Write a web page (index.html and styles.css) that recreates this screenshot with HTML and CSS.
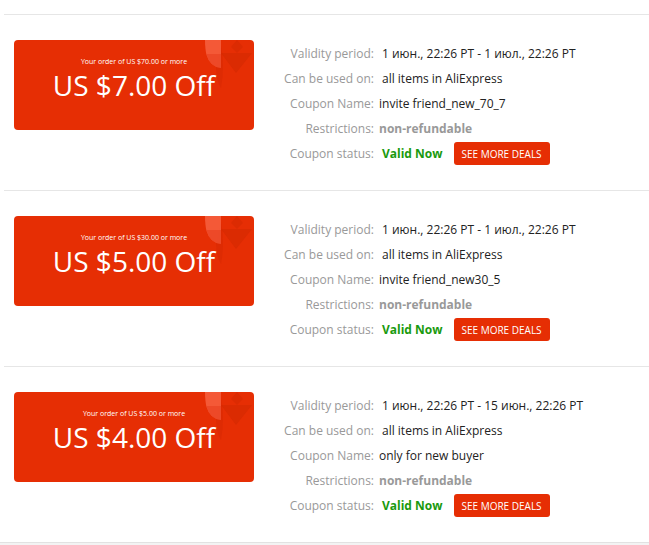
FILE: index.html
```html
<!DOCTYPE html>
<html>
<head>
<meta charset="utf-8">
<link rel="stylesheet" href="styles.css">
</head>
<body>
<div class="list">
  <div class="coupon">
    <div class="card">
      <svg class="deco" width="60" height="90" viewBox="0 0 60 90">
        <path d="M27 6 Q31 26 27 48 Q22 40 22 28 Z" fill="#c92300" opacity="0.25"/>
        <path d="M11 0 H27 V28 Q16 27 12.5 15 Q11 9 11 0 Z" fill="#f76445" opacity="0.8"/>
        <path d="M12.5 14 H27 V28 Q16 27 12.5 14 Z" fill="#e5391a" opacity="0.5"/>
        <path d="M27 13 H58 L42 33 Z" fill="#cf2800" opacity="0.5"/>
        <path d="M43 0 L49 7 L43 13 L37 7 Z" fill="#c82400" opacity="0.35"/>
      </svg>
      <div class="min">Your order of US $70.00 or more</div>
      <div class="amount">US $7.00 Off</div>
    </div>
    <div class="info">
      <div class="row"><span class="label">Validity period:</span><span class="val">1 июн., 22:26 PT - 1 июл., 22:26 PT</span></div>
      <div class="row"><span class="label">Can be used on:</span><span class="val">all items in AliExpress</span></div>
      <div class="row"><span class="label">Coupon Name:</span><span class="val name">invite friend_new_70_7</span></div>
      <div class="row"><span class="label">Restrictions:</span><span class="val muted">non-refundable</span></div>
      <div class="row"><span class="label">Coupon status:</span><span class="val valid">Valid Now</span><a class="btn">SEE MORE DEALS</a></div>
    </div>
  </div>
  <div class="coupon">
    <div class="card">
      <svg class="deco" width="60" height="90" viewBox="0 0 60 90">
        <path d="M27 6 Q31 26 27 48 Q22 40 22 28 Z" fill="#c92300" opacity="0.25"/>
        <path d="M11 0 H27 V28 Q16 27 12.5 15 Q11 9 11 0 Z" fill="#f76445" opacity="0.8"/>
        <path d="M12.5 14 H27 V28 Q16 27 12.5 14 Z" fill="#e5391a" opacity="0.5"/>
        <path d="M27 13 H58 L42 33 Z" fill="#cf2800" opacity="0.5"/>
        <path d="M43 0 L49 7 L43 13 L37 7 Z" fill="#c82400" opacity="0.35"/>
      </svg>
      <div class="min">Your order of US $30.00 or more</div>
      <div class="amount">US $5.00 Off</div>
    </div>
    <div class="info">
      <div class="row"><span class="label">Validity period:</span><span class="val">1 июн., 22:26 PT - 1 июл., 22:26 PT</span></div>
      <div class="row"><span class="label">Can be used on:</span><span class="val">all items in AliExpress</span></div>
      <div class="row"><span class="label">Coupon Name:</span><span class="val name">invite friend_new30_5</span></div>
      <div class="row"><span class="label">Restrictions:</span><span class="val muted">non-refundable</span></div>
      <div class="row"><span class="label">Coupon status:</span><span class="val valid">Valid Now</span><a class="btn">SEE MORE DEALS</a></div>
    </div>
  </div>
  <div class="coupon">
    <div class="card">
      <svg class="deco" width="60" height="90" viewBox="0 0 60 90">
        <path d="M27 6 Q31 26 27 48 Q22 40 22 28 Z" fill="#c92300" opacity="0.25"/>
        <path d="M11 0 H27 V28 Q16 27 12.5 15 Q11 9 11 0 Z" fill="#f76445" opacity="0.8"/>
        <path d="M12.5 14 H27 V28 Q16 27 12.5 14 Z" fill="#e5391a" opacity="0.5"/>
        <path d="M27 13 H58 L42 33 Z" fill="#cf2800" opacity="0.5"/>
        <path d="M43 0 L49 7 L43 13 L37 7 Z" fill="#c82400" opacity="0.35"/>
      </svg>
      <div class="min">Your order of US $5.00 or more</div>
      <div class="amount">US $4.00 Off</div>
    </div>
    <div class="info">
      <div class="row"><span class="label">Validity period:</span><span class="val">1 июн., 22:26 PT - 15 июн., 22:26 PT</span></div>
      <div class="row"><span class="label">Can be used on:</span><span class="val">all items in AliExpress</span></div>
      <div class="row"><span class="label">Coupon Name:</span><span class="val name">only for new buyer</span></div>
      <div class="row"><span class="label">Restrictions:</span><span class="val muted">non-refundable</span></div>
      <div class="row"><span class="label">Coupon status:</span><span class="val valid">Valid Now</span><a class="btn">SEE MORE DEALS</a></div>
    </div>
  </div>
  <div class="end"></div>
</div>
</body>
</html>
```
FILE: styles.css
```css
* { box-sizing: border-box; }
html, body {
  margin: 0;
  padding: 0;
  background: #fff;
  font-family: "Open Sans", "Liberation Sans", sans-serif;
}
.list {
  padding-top: 14px;
  padding-left: 4px;
}
.coupon {
  display: flex;
  align-items: flex-start;
  height: 176px;
  border-top: 1px solid #e6e6e6;
  padding: 25px 0 0 10px;
}
.card {
  position: relative;
  overflow: hidden;
  width: 240px;
  height: 90px;
  flex: none;
  background: #e62e04;
  border-radius: 4px;
  color: #fff;
  text-align: center;
  padding-top: 17px;
}
.deco {
  position: absolute;
  right: 0;
  top: 0;
}
.min {
  position: relative;
  font-size: 7px;
  line-height: 10px;
}
.amount {
  position: relative;
  font-size: 28px;
  line-height: 36px;
}
.info {
  margin-left: 26px;
  margin-top: 1px;
  font-size: 12px;
}
.row {
  display: flex;
  align-items: center;
  height: 25px;
}
.label {
  width: 94px;
  text-align: right;
  color: #999;
  flex: none;
}
.val {
  margin-left: 8px;
  color: #222;
  white-space: nowrap;
}
.val.name { margin-left: 5px; }
.val.muted {
  margin-left: 5px;
  color: #999;
  font-weight: 700;
}
.val.valid {
  color: #1a9a0e;
  font-weight: 700;
}
.btn {
  margin-left: 11px;
  display: inline-flex;
  align-items: center;
  justify-content: center;
  height: 23px;
  width: 96px;
  background: #e62e04;
  color: #fff;
  font-size: 10px;
  border-radius: 3px;
  white-space: nowrap;
}
.end {
  border-top: 1px solid #e2e2e2;
  background: #f3f3f3;
  height: 10px;
  margin-left: -4px;
}
```
